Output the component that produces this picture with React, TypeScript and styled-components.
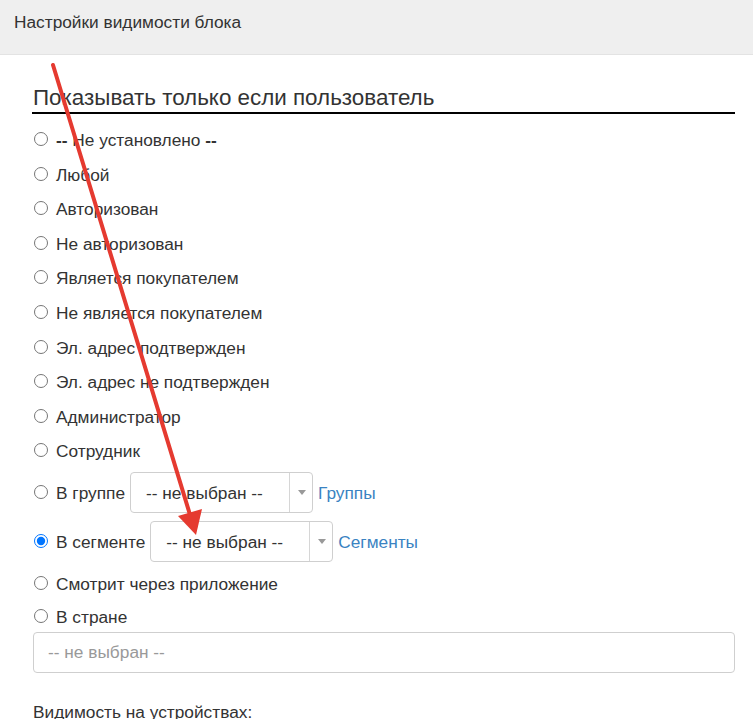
import React from "react";
import styled, { createGlobalStyle } from "styled-components";

const Global = createGlobalStyle`
  html, body { margin: 0; padding: 0; background: #fff; }
  body { font-family: "Liberation Sans", Arial, sans-serif; color: #333; }
  * { box-sizing: border-box; }
`;

const Page = styled.div`
  position: relative;
  width: 753px;
  height: 719px;
  overflow: hidden;
`;

const Header = styled.div`
  height: 55px;
  background: #efefef;
  border-bottom: 1px solid #e3e3e3;
  padding: 10px 14px;
  font-size: 17.3px;
  line-height: 24px;
  color: #333;
`;

const Body = styled.div`
  padding: 29px 18px 0 33px;
`;

const Legend = styled.div`
  font-size: 22.4px;
  line-height: 28px;
  color: #333;
  border-bottom: 2px solid #000;
  margin-bottom: 9px;
  margin-left: -1px;
  padding-left: 1px;
`;

const List = styled.div`
  display: flex;
  flex-direction: column;
`;

const Row = styled.label<{ $h?: number; $pad?: number }>`
  display: flex;
  align-items: center;
  gap: 8px;
  min-height: ${(p) => p.$h ?? 34.55}px;
  padding: ${(p) => p.$pad ?? 0}px 0;
  font-size: 17.3px;
  line-height: 20px;
  color: #333;
  cursor: pointer;
`;

const Radio = styled.input.attrs({ type: "radio" })`
  width: 14px;
  height: 14px;
  margin: -2px 0 0 1px;
  flex: none;
`;

const LabelText = styled.span`
  white-space: nowrap;
`;

const Strong = styled.b`
  font-weight: bold;
`;

const Inline = styled.span`
  display: flex;
  align-items: center;
  gap: 5px;
  margin-left: -3px;
`;

const SelectBox = styled.div`
  display: flex;
  align-items: stretch;
  width: 183px;
  height: 41px;
  border: 1px solid #cfcfcf;
  border-radius: 4px;
  background: #fff;
`;

const SelectValue = styled.div`
  flex: 1;
  display: flex;
  align-items: center;
  padding-left: 15px;
  font-size: 17.3px;
  color: #333;
  white-space: nowrap;
`;

const SelectArrow = styled.div`
  width: 23px;
  border-left: 1px solid #d6d6d6;
  display: flex;
  align-items: center;
  justify-content: center;
  &::after {
    content: "";
    border-left: 4px solid transparent;
    border-right: 4px solid transparent;
    border-top: 5px solid #999;
    margin-left: 1px;
  }
`;

const Link = styled.a`
  color: #3a83c2;
  text-decoration: none;
  font-size: 17.3px;
`;

const TextInput = styled.div`
  height: 41px;
  border: 1px solid #cfcfcf;
  border-radius: 4px;
  display: flex;
  align-items: center;
  padding-left: 14px;
  font-size: 17.3px;
  color: #999;
`;

const Caption = styled.div`
  margin-top: 29px;
  font-size: 17.3px;
  line-height: 20px;
  color: #333;
`;

const Overlay = styled.svg`
  position: absolute;
  left: 0;
  top: 0;
  width: 753px;
  height: 719px;
  pointer-events: none;
`;

const simple = [
  "Любой",
  "Авторизован",
  "Не авторизован",
  "Является покупателем",
  "Не является покупателем",
  "Эл. адрес подтвержден",
  "Эл. адрес не подтвержден",
  "Администратор",
  "Сотрудник",
];

const Select = () => (
  <SelectBox>
    <SelectValue>-- не выбран --</SelectValue>
    <SelectArrow />
  </SelectBox>
);

export default function App() {
  return (
    <Page>
      <Global />
      <Header>Настройки видимости блока</Header>
      <Body>
        <Legend>Показывать только если пользователь</Legend>
        <List>
          <Row>
            <Radio name="vis" />
            <LabelText>
              <Strong>--</Strong> Не установлено <Strong>--</Strong>
            </LabelText>
          </Row>
          {simple.map((t) => (
            <Row key={t}>
              <Radio name="vis" />
              <LabelText>{t}</LabelText>
            </Row>
          ))}
          <Row $pad={4}>
            <Radio name="vis" />
            <LabelText>В группе</LabelText>
            <Inline>
              <Select />
              <Link href="#">Группы</Link>
            </Inline>
          </Row>
          <Row $pad={4}>
            <Radio name="vis" defaultChecked />
            <LabelText>В сегменте</LabelText>
            <Inline>
              <Select />
              <Link href="#">Сегменты</Link>
            </Inline>
          </Row>
          <Row>
            <Radio name="vis" />
            <LabelText>Смотрит через приложение</LabelText>
          </Row>
          <Row $h={31}>
            <Radio name="vis" />
            <LabelText>В стране</LabelText>
          </Row>
        </List>
        <TextInput>-- не выбран --</TextInput>
        <Caption>Видимость на устройствах:</Caption>
      </Body>
      <Overlay viewBox="0 0 753 719">
        <line x1="53" y1="65" x2="191" y2="518" stroke="#e53a30" strokeWidth="4" strokeLinecap="round" />
        <polygon points="196,535 178,516 202,509" fill="#e53a30" />
      </Overlay>
    </Page>
  );
}
